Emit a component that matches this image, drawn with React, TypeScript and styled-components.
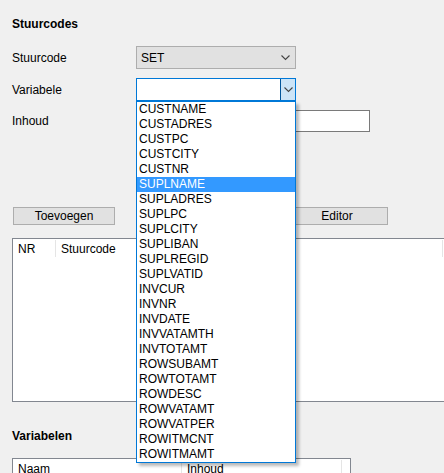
import React from "react";
import styled, { createGlobalStyle } from "styled-components";

const ITEMS = [
  "CUSTNAME",
  "CUSTADRES",
  "CUSTPC",
  "CUSTCITY",
  "CUSTNR",
  "SUPLNAME",
  "SUPLADRES",
  "SUPLPC",
  "SUPLCITY",
  "SUPLIBAN",
  "SUPLREGID",
  "SUPLVATID",
  "INVCUR",
  "INVNR",
  "INVDATE",
  "INVVATAMTH",
  "INVTOTAMT",
  "ROWSUBAMT",
  "ROWTOTAMT",
  "ROWDESC",
  "ROWVATAMT",
  "ROWVATPER",
  "ROWITMCNT",
  "ROWITMAMT",
];

const SELECTED = "SUPLNAME";

const Chevron: React.FC = () => (
  <svg width="9" height="6" viewBox="0 0 9 6">
    <polyline points="0.5,0.5 4.5,4.5 8.5,0.5" fill="none" stroke="#444" strokeWidth="1.1" />
  </svg>
);

const App: React.FC = () => {
  return (
    <>
      <GlobalStyle />
      <Page>
        <SectionTitle>Stuurcodes</SectionTitle>
        <Form>
          <Label>Stuurcode</Label>
          <Select>
            <span>SET</span>
            <Chevron />
          </Select>
          <Label>Variabele</Label>
          <Combo>
            <ComboField />
            <ComboButton>
              <Chevron />
            </ComboButton>
          </Combo>
          <Label>Inhoud</Label>
          <TextInput />
        </Form>
        <ButtonRow>
          <Button $width={102}>Toevoegen</Button>
          <Button $width={102} $offset={171}>
            Editor
          </Button>
        </ButtonRow>
        <Table $width={470} $height={164}>
          <HeaderRow>
            <HeaderCell $width={43}>NR</HeaderCell>
            <HeaderCell $width={387}>Stuurcode</HeaderCell>
          </HeaderRow>
        </Table>
        <SubTitle>Variabelen</SubTitle>
        <Table $width={339} $height={40}>
          <HeaderRow>
            <HeaderCell $width={169}>Naam</HeaderCell>
            <HeaderCell $width={160}>Inhoud</HeaderCell>
          </HeaderRow>
        </Table>
        <DropList>
          {ITEMS.map((item) => (
            <DropItem key={item} $active={item === SELECTED}>
              {item}
            </DropItem>
          ))}
        </DropList>
      </Page>
    </>
  );
};

export default App;

const GlobalStyle = createGlobalStyle`
  html, body {
    margin: 0;
    padding: 0;
    background: #f0f0f0;
    overflow: hidden;
  }
  body {
    font-family: "Liberation Sans", Arial, sans-serif;
    font-size: 12px;
    color: #000;
  }
`;

const Page = styled.div`
  position: relative;
  width: 444px;
  height: 473px;
  padding: 16px 0 0 12px;
  box-sizing: border-box;
`;

const SectionTitle = styled.div`
  font-weight: bold;
  height: 16px;
  line-height: 16px;
`;

const SubTitle = styled(SectionTitle)`
  margin-top: 26px;
`;

const Form = styled.div`
  display: grid;
  grid-template-columns: 124px auto;
  row-gap: 9px;
  align-items: center;
  justify-items: start;
  margin-top: 14px;
`;

const Label = styled.div`
  line-height: 16px;
`;

const Select = styled.div`
  width: 160px;
  height: 23px;
  box-sizing: border-box;
  border: 1px solid #adadad;
  background: #e1e1e1;
  display: flex;
  align-items: center;
  justify-content: space-between;
  padding: 0 5px 0 4px;
`;

const Combo = styled.div`
  width: 160px;
  height: 23px;
  box-sizing: border-box;
  border: 1px solid #0078d7;
  background: #fff;
  display: flex;
`;

const ComboField = styled.div`
  flex: 1;
`;

const ComboButton = styled.div`
  width: 15px;
  box-sizing: border-box;
  border-left: 1px solid #005499;
  background: #cce4f7;
  display: flex;
  align-items: center;
  justify-content: center;
  padding-top: 1px;
`;

const TextInput = styled.div`
  width: 234px;
  height: 22px;
  box-sizing: border-box;
  border: 1px solid #7a7a7a;
  background: #fff;
`;

const ButtonRow = styled.div`
  display: flex;
  margin-top: 75px;
  padding-left: 1px;
`;

const Button = styled.div<{ $width: number; $offset?: number }>`
  width: ${(p) => p.$width}px;
  height: 18px;
  box-sizing: border-box;
  margin-left: ${(p) => p.$offset ?? 0}px;
  border: 1px solid #adadad;
  background: #e1e1e1;
  display: flex;
  align-items: center;
  justify-content: center;
`;

const Table = styled.div<{ $width: number; $height: number }>`
  width: ${(p) => p.$width}px;
  height: ${(p) => p.$height}px;
  box-sizing: border-box;
  margin-top: 13px;
  border: 1px solid #828790;
  background: #fff;
  ${SubTitle} + & {
    margin-top: 14px;
  }
`;

const HeaderRow = styled.div`
  display: flex;
  height: 20px;
`;

const HeaderCell = styled.div<{ $width: number }>`
  width: ${(p) => p.$width}px;
  flex: none;
  box-sizing: border-box;
  padding-left: 5px;
  display: flex;
  align-items: center;
  border-right: 1px solid #e5e5e5;
  margin: 1px 0 2px;
`;

const DropList = styled.div`
  position: absolute;
  left: 136px;
  top: 101px;
  width: 160px;
  box-sizing: border-box;
  border: 1px solid #0078d7;
  background: #fff;
  box-shadow: 3px 3px 3px rgba(0, 0, 0, 0.28);
`;

const DropItem = styled.div<{ $active: boolean }>`
  height: 15px;
  line-height: 15px;
  padding-left: 2px;
  background: ${(p) => (p.$active ? "#3399ff" : "transparent")};
  color: ${(p) => (p.$active ? "#fff" : "#000")};
`;
